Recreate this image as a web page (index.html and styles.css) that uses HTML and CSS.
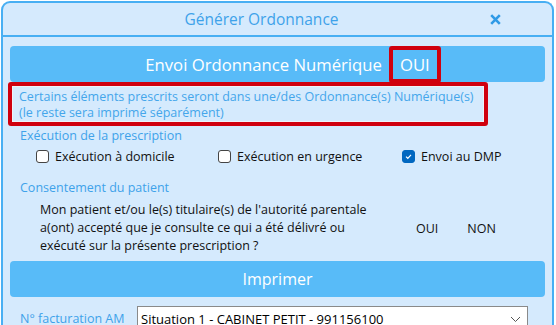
FILE: index.html
```html
<!DOCTYPE html>
<html lang="fr">
<head>
	<meta charset="UTF-8">
	<title>Générer Ordonnance</title>
	<link rel="stylesheet" href="styles.css">
</head>
<body>
	<div class="dialog">
		<div class="dialog-head">
			<span class="dialog-title">Générer Ordonnance</span>
			<svg class="dialog-close" width="11" height="11" viewBox="0 0 11 11"><path d="M1.2 1.2 L9.8 9.8 M9.8 1.2 L1.2 9.8" stroke="#2f9ae6" stroke-width="2.6"/></svg>
		</div>
		<div class="dialog-body">
			<div class="bar bar-envoi">
				<span class="bar-text">Envoi Ordonnance Numérique</span>
				<span class="bar-oui">OUI</span>
			</div>
			<div class="notice">
				<div class="notice-inner">
					Certains éléments prescrits seront dans une/des Ordonnance(s) Numérique(s)<br>
					(le reste sera imprimé séparément)
				</div>
			</div>

			<div class="section-title">Exécution de la prescription</div>
			<div class="checks">
				<label class="check"><span class="box"></span>Exécution à domicile</label>
				<label class="check"><span class="box"></span>Exécution en urgence</label>
				<label class="check"><span class="box checked"><svg width="9" height="9" viewBox="0 0 9 9"><path d="M2 4.6 L3.8 6.3 L7 2.8" fill="none" stroke="#fff" stroke-width="1.2"/></svg></span>Envoi au DMP</label>
			</div>

			<div class="section-title">Consentement du patient</div>
			<div class="consent">
				<p class="consent-text">Mon patient et/ou le(s) titulaire(s) de l'autorité parentale a(ont) accepté que je consulte ce qui a été délivré ou exécuté sur la présente prescription ?</p>
				<span class="choice">OUI</span>
				<span class="choice">NON</span>
			</div>

			<div class="bar bar-print">Imprimer</div>

			<div class="field">
				<span class="field-label">N° facturation AM</span>
				<div class="select">
					<span>Situation 1 - CABINET PETIT - 991156100</span>
					<svg width="11" height="7" viewBox="0 0 11 7"><path d="M1 1 L5.5 5.5 L10 1" fill="none" stroke="#555" stroke-width="1"/></svg>
				</div>
			</div>
		</div>
	</div>
</body>
</html>
```

FILE: styles.css
```css
*{margin: 0;padding: 0;box-sizing: border-box;}
body {
	background: #fff;
	font-family: "Open Sans", "Noto Sans", sans-serif;
	font-size: 12.5px;
	padding: 1px 2px 0 1px;
	overflow: hidden;
}
.dialog {
	background: #d5eafd;
	border: 2px solid #48aff3;
	border-bottom: none;
	border-radius: 9px 9px 0 0;
	height: 340px;
}
.dialog-head {
	height: 34px;
	border-bottom: 2px solid #48aff3;
	display: flex;
	align-items: center;
	justify-content: center;
	padding-right: 32px;
	position: relative;
}
.dialog-title {
	color: #3ea2ea;
	font-size: 15.5px;
}
.dialog-close {
	position: absolute;
	right: 51px;
	top: 11px;
}
.dialog-body {
	padding: 9px 7px 0 7px;
}
.bar {
	background: #58bbf8;
	color: #fff;
	border-radius: 4px;
	height: 36px;
	display: flex;
	align-items: center;
	justify-content: center;
	font-size: 16.7px;
}
.bar-envoi {
	padding-left: 31px;
}
.bar-oui {
	margin-left: 7px;
	padding: 0 7px;
	height: 37px;
	line-height: 29px;
	border: 4px solid #d0000e;
	border-radius: 3px;
	align-self: flex-start;
}
.notice {
	border: 4px solid #d0000e;
	border-radius: 3px;
	width: 480px;
	margin-left: -2px;
}
.notice-inner {
	border: 1px solid #eef3f8;
	color: #44a6eb;
	line-height: 16px;
	padding: 2px 6px 0;
	white-space: nowrap;
}
.section-title {
	color: #3ea2ea;
	margin: 2px 0 0 10px;
	line-height: 16px;
}
.checks {
	display: flex;
	padding: 3px 0 0 26px;
	height: 34px;
}
.check {
	display: flex;
	align-items: center;
	color: #111;
	height: 18px;
}
.check:nth-child(1) { width: 182px; }
.check:nth-child(2) { width: 184px; }
.box {
	width: 13px;
	height: 13px;
	border: 1px solid #444;
	border-radius: 3px;
	background: #fff;
	margin-right: 6px;
	display: flex;
	align-items: center;
	justify-content: center;
}
.box.checked {
	background: #0067c0;
	border-color: #0067c0;
}
.consent {
	display: flex;
	align-items: center;
	padding: 5px 0 0 30px;
	color: #111;
}
.consent-text {
	width: 336px;
	line-height: 18px;
}
.choice {
	margin-left: 40px;
}
.choice + .choice {
	margin-left: 29px;
}
.bar-print {
	margin-top: 6px;
	font-size: 16px;
}
.field {
	display: flex;
	margin-top: 9px;
	padding-left: 10px;
}
.field-label {
	color: #3ea2ea;
	width: 117px;
	padding-top: 4px;
}
.select {
	width: 391px;
	height: 24px;
	background: #fff;
	border: 1px solid #8a8a8a;
	display: flex;
	align-items: center;
	justify-content: space-between;
	padding: 2px 6px 0 3px;
	color: #000;
	font-size: 13px;
}
```
